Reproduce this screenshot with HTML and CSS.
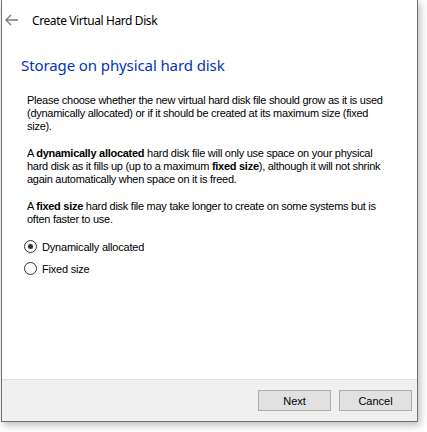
FILE: index.html
```html
<!DOCTYPE html>
<html>
<head>
<meta charset="utf-8">
<link rel="stylesheet" href="styles.css">
</head>
<body>
<div class="frame">
  <div class="titlebar">
    <svg class="back" width="14" height="12" viewBox="0 0 14 12"><path d="M6 1 L1 6 L6 11 M1 6 H13" fill="none" stroke="#7a7a7a" stroke-width="1.3"/></svg>
    <span class="title">Create Virtual Hard Disk</span>
  </div>
  <div class="content">
    <h1 class="heading">Storage on physical hard disk</h1>
    <p class="para">Please choose whether the new virtual hard disk file should grow as it is used<br>(dynamically allocated) or if it should be created at its maximum size (fixed<br>size).</p>
    <p class="para">A <b>dynamically allocated</b> hard disk file will only use space on your physical<br>hard disk as it fills up (up to a maximum <b>fixed size</b>), although it will not shrink<br>again automatically when space on it is freed.</p>
    <p class="para">A <b>fixed size</b> hard disk file may take longer to create on some systems but is<br>often faster to use.</p>
    <div class="options">
      <label class="radio"><span class="dot checked"></span>Dynamically allocated</label>
      <label class="radio"><span class="dot"></span>Fixed size</label>
    </div>
  </div>
  <div class="footer">
    <button class="btn">Next</button>
    <button class="btn">Cancel</button>
  </div>
</div>
</body>
</html>
```
FILE: styles.css
```css
html, body { margin: 0; padding: 0; background: #ffffff; }
body { width: 427px; height: 432px; overflow: hidden; }
.frame {
  margin-left: 1px;
  width: 415px;
  height: 421px;
  border: 1px solid #707070;
  border-top: none;
  background: #ffffff;
  box-shadow: 2px 3px 8px rgba(0,0,0,0.28);
  display: flex;
  flex-direction: column;
}
.titlebar {
  height: 40px;
  display: flex;
  align-items: center;
  padding-left: 3px;
}
.back { margin-right: 13px; }
.title {
  font-family: "Noto Sans", sans-serif;
  font-size: 12px;
  letter-spacing: -0.4px;
  color: #000;
}
.content { flex: 1; padding: 0 0 0 19px; }
.heading {
  margin: 15px 0 19px 0;
  font-family: "Noto Sans", sans-serif;
  font-weight: normal;
  font-size: 15px;
  letter-spacing: -0.1px;
  line-height: 20px;
  color: #0033bc;
}
.para {
  margin: 0 0 14px 6px;
  font-family: "Liberation Sans", sans-serif;
  font-size: 11px;
  letter-spacing: -0.27px;
  line-height: 13px;
  color: #000;
}
.options { margin-left: 3px; display: flex; flex-direction: column; gap: 9px; margin-top: 10px; }
.radio {
  display: flex;
  align-items: center;
  font-family: "Liberation Sans", sans-serif;
  font-size: 11px;
  letter-spacing: -0.2px;
  color: #000;
  height: 13px;
}
.dot {
  width: 13px; height: 13px;
  border: 1px solid #333;
  border-radius: 50%;
  margin-right: 5px;
  box-sizing: border-box;
  position: relative;
  background: #fff;
}
.dot.checked::after {
  content: "";
  position: absolute;
  left: 3px; top: 3px;
  width: 5px; height: 5px;
  border-radius: 50%;
  background: #333;
}
.footer {
  height: 42px;
  border-top: 1px solid #dfdfdf;
  background: #f0f0f0;
  display: flex;
  justify-content: flex-end;
  align-items: flex-start;
  padding: 10px 5px 0 0;
  box-sizing: border-box;
  gap: 8px;
}
.btn {
  width: 73px;
  height: 21px;
  background: #e1e1e1;
  border: 1px solid #adadad;
  font-family: "Liberation Sans", sans-serif;
  font-size: 11px;
  color: #000;
  padding: 0;
}
```
